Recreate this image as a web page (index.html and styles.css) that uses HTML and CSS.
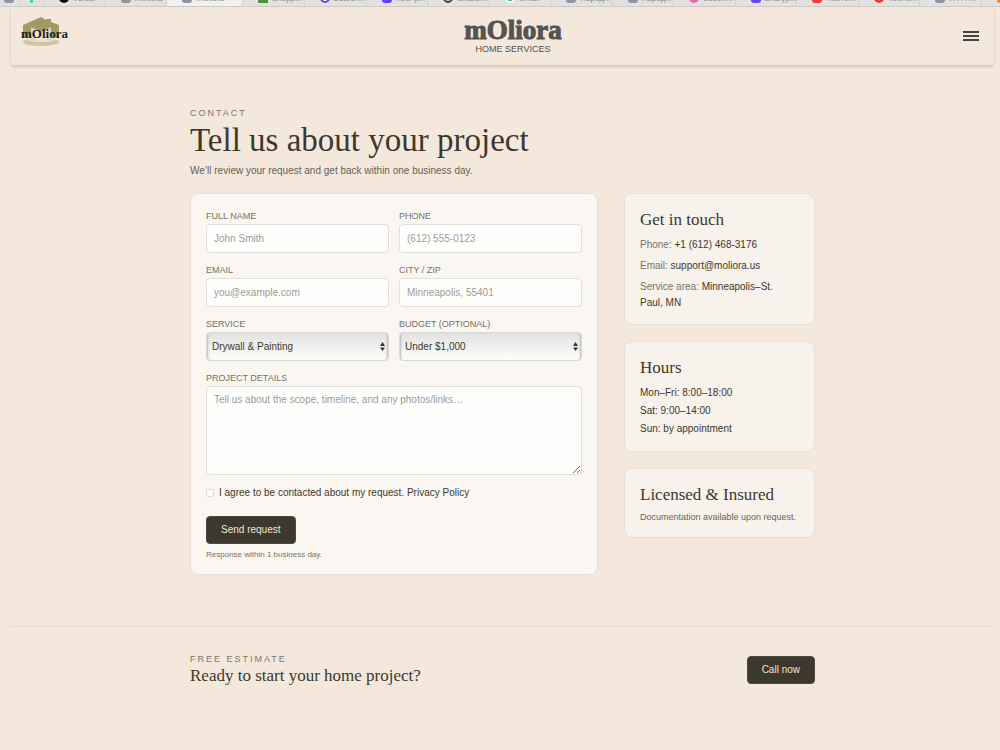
FILE: index.html
```html
<!DOCTYPE html>
<html lang="en">
	<head>
		<meta charset="UTF-8" />
		<meta name="viewport" content="width=device-width, initial-scale=1.0" />
		<title>mOliora Home Services - Contact</title>
		<link rel="stylesheet" href="styles.css">
	</head>
	<body>
		<div class="tabs">
			<div class="tab tab-pin"><i class="fav"></i></div>
			<div class="tab tab-pin"><i class="fav fav-line"></i></div>
			<div class="tab"><i class="fav fav-black"></i><span>Vercel</span></div>
			<div class="tab"><i class="fav"></i><span>mOliora</span></div>
			<div class="tab tab-active"><i class="fav"></i><span>mOliora</span><span class="tab-more">–</span></div>
			<div class="tab"><i class="fav fav-green"></i><span>Shopp...</span></div>
			<div class="tab"><i class="fav fav-ring"></i><span>Search...</span></div>
			<div class="tab"><i class="fav fav-violet"></i><span>Your p...</span></div>
			<div class="tab"><i class="fav fav-dark"></i><span>ChatG...</span></div>
			<div class="tab"><i class="fav fav-leaf"></i><span>Gmail</span></div>
			<div class="tab"><i class="fav"></i><span>Народ...</span></div>
			<div class="tab"><i class="fav"></i><span>Народ...</span></div>
			<div class="tab"><i class="fav fav-pink"></i><span>Socon...</span></div>
			<div class="tab"><i class="fav fav-violet"></i><span>Encryp...</span></div>
			<div class="tab"><i class="fav fav-play"></i><span>YouTu...</span></div>
			<div class="tab"><i class="fav fav-red"></i><span>YouTu...</span></div>
			<div class="tab"><i class="fav"></i><span>HTTP...</span></div>
			<div class="tab tab-last"><i class="fav fav-orange"></i></div>
		</div>

		<div class="page">
			<header class="header">
				<a class="logo" href="#" aria-label="mOliora">
					<svg width="50" height="32" viewBox="0 0 50 32">
						<ellipse cx="21" cy="26" rx="18" ry="4" fill="#cfc49c" />
						<ellipse cx="21" cy="24" rx="14" ry="2" fill="#e6dcc8" />
						<path d="M3 9 L21 1 L26 4 V3 H31 V6 L39 9 V22 H3 Z" fill="#a39a63" />
						<path d="M11 11 L21 16 L31 11 V24 H11 Z" fill="#ddd3c4" />
						<path d="M15 14 L21 17 L27 14 V24 H15 Z" fill="#eee5d9" />
						<text x="1" y="22" class="logo-text">mOliora</text>
					</svg>
				</a>
				<div class="brand">
					<div class="brand-name">mOliora</div>
					<div class="brand-sub">HOME SERVICES</div>
				</div>
				<button class="menu-btn" aria-label="Menu">
					<span></span>
					<span></span>
					<span></span>
				</button>
			</header>

			<main class="container">
				<p class="kicker">CONTACT</p>
				<h1 class="title">Tell us about your project</h1>
				<p class="lead">We’ll review your request and get back within one business day.</p>

				<div class="columns">
					<form class="card form" action="">
						<div class="fields">
							<div class="field">
								<label for="name">FULL NAME</label>
								<input type="text" id="name" placeholder="John Smith" />
							</div>
							<div class="field">
								<label for="phone">PHONE</label>
								<input type="tel" id="phone" placeholder="(612) 555-0123" />
							</div>
							<div class="field">
								<label for="email">EMAIL</label>
								<input type="email" id="email" placeholder="you@example.com" />
							</div>
							<div class="field">
								<label for="city">CITY / ZIP</label>
								<input type="text" id="city" placeholder="Minneapolis, 55401" />
							</div>
							<div class="field">
								<label for="service">SERVICE</label>
								<div class="select">
									<select id="service">
										<option>Drywall &amp; Painting</option>
									</select>
									<svg class="arrows" width="5" height="9" viewBox="0 0 10 18">
										<path d="M0 8 L5 0 L10 8 Z M0 11 H10 L5 18 Z" fill="#333" />
									</svg>
								</div>
							</div>
							<div class="field">
								<label for="budget">BUDGET (OPTIONAL)</label>
								<div class="select">
									<select id="budget">
										<option>Under $1,000</option>
									</select>
									<svg class="arrows" width="5" height="9" viewBox="0 0 10 18">
										<path d="M0 8 L5 0 L10 8 Z M0 11 H10 L5 18 Z" fill="#333" />
									</svg>
								</div>
							</div>
							<div class="field field-wide">
								<label for="details">PROJECT DETAILS</label>
								<textarea id="details" placeholder="Tell us about the scope, timeline, and any photos/links…"></textarea>
							</div>
						</div>
						<div class="agree">
							<input type="checkbox" id="agree" />
							<label for="agree">I agree to be contacted about my request. <a href="#">Privacy Policy</a></label>
						</div>
						<button class="btn" type="submit">Send request</button>
						<p class="note">Response within 1 business day.</p>
					</form>

					<aside class="side">
						<section class="card info">
							<h2>Get in touch</h2>
							<ul class="contacts">
								<li>Phone: <a href="#">+1 (612) 468-3176</a></li>
								<li>Email: <a href="#">support@moliora.us</a></li>
								<li>Service area: <span>Minneapolis–St. Paul, MN</span></li>
							</ul>
						</section>
						<section class="card info">
							<h2>Hours</h2>
							<ul class="hours">
								<li>Mon–Fri: 8:00–18:00</li>
								<li>Sat: 9:00–14:00</li>
								<li>Sun: by appointment</li>
							</ul>
						</section>
						<section class="card info">
							<h2>Licensed &amp; Insured</h2>
							<p class="docs">Documentation available upon request.</p>
						</section>
					</aside>
				</div>
			</main>

			<section class="cta">
				<div class="container cta-row">
					<div>
						<p class="kicker">FREE ESTIMATE</p>
						<h2>Ready to start your home project?</h2>
					</div>
					<button class="btn">Call now</button>
				</div>
			</section>
		</div>
	</body>
</html>
```

FILE: styles.css
```css
* {
	box-sizing: border-box;
}
body {
	margin: 0;
	background-color: #f4e8dc;
	color: #3d382d;
	font-family: "Liberation Sans", Arial, sans-serif;
	font-size: 10px;
	line-height: 16px;
}
h1, h2, p, ul {
	margin: 0;
	padding: 0;
	font-weight: normal;
}
h1, h2 {
	font-family: "Liberation Serif", "Times New Roman", serif;
}
ul {
	list-style: none;
}
a {
	color: inherit;
	text-decoration: none;
}
input, select, textarea, button {
	font: inherit;
	color: inherit;
	margin: 0;
}

/* browser tabs, only the bottom edge is visible */
.tabs {
	display: grid;
	grid-template-columns: 21px 23px repeat(2, 1fr) 76px repeat(12, 1fr) 18px;
	height: 7px;
	overflow: hidden;
	background-color: #e3e2e1;
	border-bottom: 1px solid #cfcac5;
}
.tab {
	display: flex;
	align-items: flex-end;
	gap: 4px;
	height: 6px;
	padding-left: 15px;
	border-right: 1px solid #d3d2d1;
	color: #8a8a8c;
	font-size: 8px;
	line-height: 10px;
}
.tab span {
	margin-bottom: 2px;
}
.tab .tab-more {
	margin-left: 4px;
}
.tab-pin {
	padding-left: 4px;
}
.tab-last {
	border-right: 0;
}
.tab-active {
	background-color: #f1f0ef;
}
.fav {
	flex: none;
	width: 10px;
	height: 10px;
	margin-bottom: 3px;
	border-radius: 3px;
	background-color: #9293a0;
}
.fav-line {
	width: 3px;
	margin-left: 5px;
	background-color: #4fd184;
}
.fav-black {
	border-radius: 50%;
	background-color: #000;
}
.fav-green {
	border-radius: 0;
	background-color: #4a9440;
}
.fav-ring {
	border-radius: 50%;
	border: 2px solid #5a46e8;
	background-color: #fff;
}
.fav-violet {
	background-color: #6241f5;
}
.fav-dark {
	border-radius: 50%;
	border: 2px solid #444;
	background-color: #ccc;
}
.fav-leaf {
	border-radius: 50%;
	border: 2px solid #fff;
	background-color: #34a853;
}
.fav-pink {
	border-radius: 50%;
	background-color: #e66aa6;
}
.fav-play {
	background-color: #f33a3a;
}
.fav-red {
	border-radius: 50%;
	background-color: #f33a3a;
}
.fav-orange {
	background-color: #e88a3c;
}

.page {
	margin: 0 6px 0 11px;
}
.header {
	display: grid;
	grid-template-columns: 1fr auto 1fr;
	height: 58px;
	padding: 9px 15px 0 9px;
	border-radius: 0 0 4px 4px;
	box-shadow: 0 2px 3px rgba(90, 60, 30, 0.2);
}
.logo svg {
	display: block;
}
.logo-text {
	font: bold 13px "Liberation Serif", serif;
	fill: #1d1f1c;
}
.brand {
	text-align: center;
	margin-left: 27px;
}
.brand-name {
	font: bold 27px/28px "Liberation Serif", serif;
	color: #555450;
	-webkit-text-stroke: 1px #555450;
}
.brand-sub {
	font-size: 9px;
	line-height: 10px;
	color: #55514a;
}
.menu-btn {
	display: flex;
	flex-direction: column;
	justify-content: space-between;
	justify-self: end;
	width: 16px;
	height: 10px;
	margin-top: 15px;
	padding: 0;
	border: 0;
	background: none;
}
.menu-btn span {
	width: 16px;
	height: 2px;
	background-color: #444;
}

.container {
	max-width: 625px;
	margin: 0 auto;
}
main.container {
	padding: 42px 0 51px;
}
.kicker {
	font-size: 9px;
	line-height: 12px;
	letter-spacing: 2px;
	color: #7c766a;
}
.title {
	font-size: 33px;
	line-height: 42px;
}
.lead {
	margin-top: 2px;
	color: #665f53;
}
.columns {
	display: grid;
	grid-template-columns: 408fr 191fr;
	align-items: start;
	gap: 26px;
	margin-top: 14px;
}
.card {
	padding: 16px 15px 13px;
	border: 1px solid #e6dfd6;
	border-radius: 8px;
}
.form {
	background-color: #faf7f2;
}
.fields {
	display: grid;
	grid-template-columns: 1fr 1fr;
	gap: 11px 10px;
}
.field {
	display: flex;
	flex-direction: column;
	gap: 2px;
}
.field-wide {
	grid-column: span 2;
}
.field label {
	font-size: 9px;
	line-height: 12px;
	color: #777166;
}
.field input, .field textarea {
	width: 100%;
	height: 29px;
	padding: 0 7px;
	border: 1px solid #e0dfda;
	border-radius: 4px;
	background-color: #fefefd;
}
.field textarea {
	display: block;
	height: 89px;
	padding: 5px 7px;
	resize: vertical;
}
.field ::placeholder {
	color: #9f9c96;
}
.select {
	display: grid;
	align-items: center;
}
.select select, .arrows {
	grid-area: 1 / 1;
}
.select select {
	appearance: none;
	width: 100%;
	height: 29px;
	padding: 0 5px;
	border: 1px solid #dad9d6;
	border-radius: 4px;
	background: linear-gradient(#e2e2e0, #fefefd);
	box-shadow: inset 2px 0 2px -1px #bbb, inset -2px 0 2px -1px #bbb;
}
.arrows {
	justify-self: end;
	margin-right: 4px;
	pointer-events: none;
}
.agree {
	display: flex;
	align-items: center;
	gap: 5px;
	margin: 10px 0 15px;
}
.agree input {
	appearance: none;
	width: 8px;
	height: 8px;
	border: 1px solid #dddcd9;
	border-radius: 2px;
	background-color: #fff;
}
.btn {
	height: 28px;
	padding: 0 14px;
	border: 1px solid #4e493d;
	border-radius: 4px;
	background-color: #3d382d;
	color: #eee6da;
}
.note {
	margin-top: 5px;
	font-size: 8px;
	line-height: 12px;
	color: #777166;
}
.side {
	display: grid;
	gap: 16px;
}
.info {
	background-color: #f7f2ec;
}
.info h2, .cta h2 {
	font-size: 17px;
	line-height: 20px;
}
.contacts {
	display: grid;
	gap: 5px;
	margin-top: 7px;
	padding-right: 16px;
	color: #777166;
}
.contacts a, .contacts span {
	color: #3d382d;
}
.hours {
	margin-top: 6px;
	line-height: 18px;
}
.docs {
	margin-top: 5px;
	font-size: 9px;
	line-height: 14px;
	color: #6b655a;
}

.cta {
	border-top: 1px solid #e3d8cb;
	padding: 26px 0 40px;
}
.cta-row {
	display: flex;
	align-items: center;
	justify-content: space-between;
}
.cta h2 {
	line-height: 22px;
}
```
